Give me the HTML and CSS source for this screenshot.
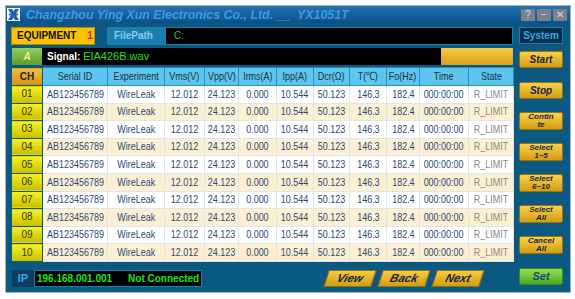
FILE: index.html
```html
<!DOCTYPE html>
<html lang="en">
  <head>
    <meta charset="UTF-8" />
    <title>YX1051T</title>
    <link rel="stylesheet" href="styles.css">
  </head>
  <body>
    <div class="window">
      <!-- Title bar -->
      <div class="titlebar">
        <svg class="logo" width="13" height="13" viewBox="0 0 13 13">
          <rect width="13" height="13" fill="#f4f8fc" />
          <path d="M1 1 L5 1 L12 12 L8 12 Z" fill="#1f5fb0" />
          <path d="M12 1 L8 1 L1 12 L5 12 Z" fill="#1f5fb0" />
          <rect x="2" y="5.5" width="9" height="2" fill="#1f5fb0" />
        </svg>
        <span class="title">Changzhou Ying Xun Electronics Co., Ltd. __&nbsp; YX1051T</span>
        <div class="winbtns">
          <span class="winbtn">?</span>
          <span class="winbtn">&minus;</span>
          <span class="winbtn">&#x2715;</span>
        </div>
      </div>

      <div class="panel">
        <div class="left">
          <div class="row-top">
            <div class="equip">EQUIPMENT <span class="num">1</span></div>
            <div class="filepath">FilePath</div>
            <div class="path">C:</div>
          </div>
          <div class="row-signal">
            <div class="chan">A</div>
            <div class="signal"><b>Signal:</b> <span class="wav">EIA426B.wav</span></div>
            <div class="signal-bar"></div>
          </div>

          <table class="grid">
            <colgroup>
              <col style="width:31px" /><col style="width:65px" /><col style="width:57px" />
              <col style="width:40px" /><col style="width:34px" /><col style="width:38px" />
              <col style="width:37px" /><col style="width:36px" /><col style="width:37px" />
              <col style="width:33px" /><col style="width:49px" /><col style="width:45px" />
            </colgroup>
            <thead>
              <tr>
                <th class="ch">CH</th>
                <th><span>Serial ID</span></th><th><span>Experiment</span></th>
                <th><span>Vms(V)</span></th><th><span>Vpp(V)</span></th>
                <th><span>Irms(A)</span></th><th><span>Ipp(A)</span></th>
                <th><span>Dcr(&Omega;)</span></th><th><span>T(&#8451;)</span></th>
                <th><span>Fo(Hz)</span></th><th><span>Time</span></th><th><span>State</span></th>
              </tr>
            </thead>
            <tbody id="rows"></tbody>
          </table>

          <div class="row-bottom">
            <div class="ip">IP</div>
            <div class="conn"><span>196.168.001.001</span><span>Not Connected</span></div>
            <div class="navbtns">
              <span class="nav">View</span>
              <span class="nav">Back</span>
              <span class="nav">Next</span>
            </div>
          </div>
        </div>

        <div class="right">
          <div class="system">System</div>
          <div class="btn">Start</div>
          <div class="btn">Stop</div>
          <div class="btn two"><span>Contin</span><span>te</span></div>
          <div class="btn two"><span>Select</span><span>1~5</span></div>
          <div class="btn two"><span>Select</span><span>6~10</span></div>
          <div class="btn two"><span>Select</span><span>All</span></div>
          <div class="btn two"><span>Cancel</span><span>All</span></div>
          <div class="btn set">Set</div>
        </div>
      </div>
    </div>

    <script>
      const tbody = document.getElementById("rows");
      const cells = ["AB123456789", "WireLeak", "12.012", "24.123", "0.000",
        "10.544", "50.123", "146.3", "182.4", "000:00:00", "R_LIMIT"];
      for (let i = 1; i <= 10; i++) {
        const tr = document.createElement("tr");
        let html = `<td class="ch">${String(i).padStart(2, "0")}</td>`;
        cells.forEach((c, k) => {
          html += `<td${k === 10 ? ' class="state"' : ""}><span>${c}</span></td>`;
        });
        tr.innerHTML = html;
        tbody.appendChild(tr);
      }
    </script>
  </body>
</html>
```

FILE: styles.css
```css
body {
  margin: 0;
  background-color: #ffffff;
  font-family: "Liberation Sans", Arial, sans-serif;
}
.window {
  margin: 5px 0 0 5px;
  width: 564px;
  height: 286px;
  border: 1px solid #a9b4bc;
  background-color: #0b5880;
  overflow: hidden;
}
.titlebar {
  height: 17px;
  display: flex;
  align-items: center;
  padding-left: 1px;
  background: linear-gradient(#2272b4, #0d4f8a);
}
.logo {
  margin-right: 6px;
}
.title {
  flex: 1;
  color: #3a9ede;
  font-size: 12.4px;
  font-weight: bold;
  font-style: italic;
  white-space: nowrap;
}
.winbtns {
  display: flex;
  gap: 2px;
  margin-right: 3px;
}
.winbtn {
  width: 14px;
  height: 12px;
  background-color: #7b8188;
  color: #d8dde2;
  font-size: 10px;
  line-height: 12px;
  text-align: center;
}
.panel {
  display: flex;
  gap: 4px;
  padding: 4px 4px 0 5px;
}
.left {
  width: 502px;
  display: flex;
  flex-direction: column;
}
.row-top {
  display: flex;
  height: 18px;
}
.equip {
  width: 84px;
  border: 1px solid #b8860a;
  background-color: #fcc200;
  color: #111;
  font-size: 10px;
  font-weight: bold;
  line-height: 16px;
  padding-left: 5px;
  box-sizing: border-box;
}
.equip .num {
  color: #e02010;
  margin-left: 8px;
}
.filepath {
  width: 58px;
  margin-left: 12px;
  background-color: #1a7db0;
  color: #8ccbe8;
  font-size: 10px;
  font-weight: bold;
  line-height: 18px;
  padding-left: 7px;
  box-sizing: border-box;
}
.path {
  flex: 1;
  background-color: #000;
  border: 1px solid #1a7db0;
  color: #22d022;
  font-size: 10px;
  line-height: 16px;
  padding-left: 8px;
}
.row-signal {
  display: flex;
  height: 17px;
  margin-top: 3px;
}
.chan {
  width: 30px;
  margin-left: 1px;
  background: linear-gradient(#92d05a, #5c9c2e);
  color: #eef5a8;
  font-size: 10px;
  font-weight: bold;
  font-style: italic;
  text-align: center;
  line-height: 17px;
}
.signal {
  width: 399px;
  background-color: #000;
  color: #ffffff;
  font-size: 10px;
  line-height: 17px;
  padding-left: 5px;
  box-sizing: border-box;
}
.wav {
  color: #20e020;
  font-size: 11px;
}
.signal-bar {
  flex: 1;
  background: linear-gradient(#f4ca40, #d8a018);
}
.grid {
  margin-top: 2px;
  width: 502px;
  table-layout: fixed;
  border-collapse: collapse;
  font-size: 11.5px;
  line-height: 1;
  text-align: center;
}
.grid span {
  display: inline-block;
  margin: 0 -10px;
  transform: scaleX(0.78);
  white-space: nowrap;
}
.grid th {
  height: 17px;
  padding: 0;
  background-color: #5cc6ee;
  border: 1px solid #2c8bbb;
  color: #1c2e44;
  font-weight: normal;
}
.grid th.ch {
  background: linear-gradient(#f4be40, #d8920e);
  font-size: 10px;
  font-weight: bold;
  color: #222;
  border-color: #0b5880;
}
.grid td {
  height: 16.6px;
  padding: 0;
  border: 1px solid #dde6ec;
  color: #2b4a78;
  background-color: #ffffff;
  white-space: nowrap;
}
.grid tbody tr:nth-child(even) td {
  background-color: #fdf0d2;
}
.grid td.ch,
.grid tbody tr:nth-child(even) td.ch {
  background: linear-gradient(#f6f226, #c8be00);
  border: 1px solid #0b5880;
  font-size: 10px;
  color: #3a3a10;
}
.grid td.state {
  color: #8a8a8a;
}
.row-bottom {
  display: flex;
  align-items: center;
  height: 17px;
  margin-top: 8px;
}
.ip {
  width: 22px;
  margin-left: 1px;
  height: 17px;
  background-color: #0e3e60;
  color: #3aa8e8;
  font-size: 11px;
  font-weight: bold;
  text-align: center;
  line-height: 17px;
}
.conn {
  width: 168px;
  height: 17px;
  box-sizing: border-box;
  border: 1px solid #1a7db0;
  background-color: #000;
  color: #20e020;
  font-size: 10px;
  font-weight: bold;
  line-height: 15px;
  display: flex;
  gap: 16px;
  padding-left: 2px;
}
.navbtns {
  display: flex;
  gap: 6px;
  margin-left: 124px;
}
.nav {
  width: 48px;
  height: 17px;
  transform: skewX(-18deg);
  background: linear-gradient(#f6cc40, #d49c10);
  border: 1px solid #9a7010;
  box-sizing: border-box;
  color: #1a2448;
  font-size: 11.5px;
  font-weight: bold;
  font-style: italic;
  text-align: center;
  line-height: 15px;
}
.right {
  width: 48px;
  display: flex;
  flex-direction: column;
  align-items: center;
}
.system {
  width: 44px;
  height: 17px;
  box-sizing: border-box;
  border: 1px solid #1a7db0;
  background-color: #0a2e48;
  color: #3aa8e8;
  font-size: 10px;
  font-weight: bold;
  text-align: center;
  line-height: 15px;
}
.btn {
  width: 44px;
  height: 17px;
  margin-top: 14px;
  box-sizing: border-box;
  border: 1px solid #9a7010;
  border-radius: 2px;
  background: linear-gradient(#f8d24a, #d49c12);
  color: #1a2448;
  font-size: 10px;
  font-weight: bold;
  font-style: italic;
  text-align: center;
  line-height: 15px;
}
.right .system + .btn {
  margin-top: 7px;
}
.btn.two {
  height: 18px;
  margin-top: 13px;
  display: flex;
  flex-direction: column;
  align-items: center;
  font-size: 8px;
  line-height: 8px;
}
.btn.two span {
  display: block;
  height: 8px;
}
.btn.set {
  margin-top: 14px;
  background: linear-gradient(#92e050, #4ca822);
  border-color: #3a8a1a;
  color: #1d4a6a;
  font-size: 11px;
}
```
